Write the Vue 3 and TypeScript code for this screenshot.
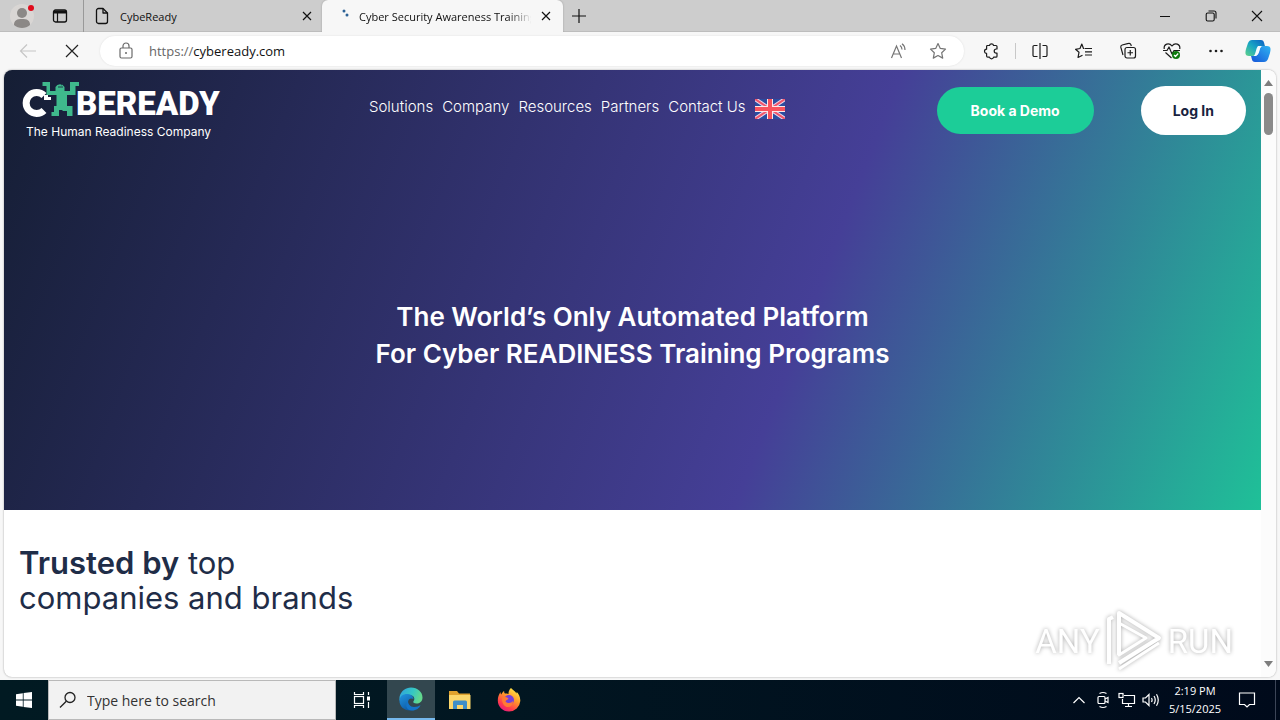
<script setup lang="ts">
import { ref } from 'vue'

const address = ref('cybeready.com')
const query = ref('')
const navLinks: string[] = ['Solutions', 'Company', 'Resources', 'Partners', 'Contact Us']
</script>

<template>
  <div class="desktop">
    <div class="tabstrip">
      <button class="profile" aria-label="Profile">
        <svg width="28" height="28" viewBox="0 0 28 28">
          <circle cx="14" cy="14" r="12" fill="#d9d6d4" />
          <circle cx="14" cy="11" r="5" fill="#8b8886" />
          <path d="M6 23c0-5 3-6 8-6s8 1 8 6c-4 4-12 4-16 0z" fill="#8b8886" />
          <circle cx="23" cy="6" r="3" fill="#e00b1c" />
        </svg>
      </button>
      <button class="workspaces" aria-label="Tab actions">
        <svg width="16" height="16" viewBox="0 0 16 16" fill="none" stroke="#111">
          <rect x="1.5" y="2" width="13" height="12" rx="2" stroke-width="1.3" />
          <path d="M2 4h12" stroke-width="3" />
          <path d="M5.5 5v9" stroke-width="1.2" />
        </svg>
      </button>
      <div class="tab">
        <svg width="16" height="18" viewBox="0 0 16 18" fill="none" stroke="#111" stroke-width="1.3" stroke-linejoin="round">
          <path d="M2.500 3.500a2 2 0 0 1 2-2H9l4.500 4.500v8.500a2 2 0 0 1-2 2h-7a2 2 0 0 1-2-2z" />
          <path d="M9 1.500V6h4.500" />
        </svg>
        <span class="tab-title">CybeReady</span>
        <button aria-label="Close tab">
          <svg width="10" height="10" viewBox="0 0 10 10" stroke="#111" stroke-width="1.2"><path d="M1 1l8 8M9 1l-8 8" /></svg>
        </button>
      </div>
      <div class="tab active">
        <svg width="16" height="18" viewBox="0 0 16 18" fill="#2d6296">
          <circle cx="7" cy="4" r="1.500" /><circle cx="10" cy="8" r="1.500" />
        </svg>
        <span class="tab-title fading">Cyber Security Awareness Training</span>
        <button aria-label="Close tab">
          <svg width="10" height="10" viewBox="0 0 10 10" stroke="#111" stroke-width="1.2"><path d="M1 1l8 8M9 1l-8 8" /></svg>
        </button>
      </div>
      <button class="new-tab" aria-label="New tab">
        <svg width="14" height="14" viewBox="0 0 14 14" stroke="#111" stroke-width="1.2"><path d="M7 0v14M0 7h14" /></svg>
      </button>
      <div class="window-buttons">
        <button aria-label="Minimize">
          <svg width="12" height="12" viewBox="0 0 12 12" stroke="#111"><path d="M1 6.500h10" /></svg>
        </button>
        <button aria-label="Restore">
          <svg width="12" height="12" viewBox="0 0 12 12" fill="none" stroke="#111" stroke-width="1.1">
            <rect x="1.200" y="3" width="8" height="8" rx="1.500" />
            <path d="M3.500 1H9a2 2 0 0 1 2 2v5.500" />
          </svg>
        </button>
        <button aria-label="Close">
          <svg width="12" height="12" viewBox="0 0 12 12" stroke="#111" stroke-width="1.100"><path d="M1 1l10 10M11 1L1 11" /></svg>
        </button>
      </div>
    </div>

    <div class="toolbar">
      <button class="tool" aria-label="Back">
        <svg width="18" height="16" viewBox="0 0 18 16" fill="none" stroke="#c6c6c6" stroke-width="1.200"><path d="M17 8H2M8 1.500L1.500 8 8 14.500" /></svg>
      </button>
      <button class="tool" aria-label="Stop">
        <svg width="14" height="14" viewBox="0 0 14 14" stroke="#222" stroke-width="1.200"><path d="M1 1l12 12M13 1L1 13" /></svg>
      </button>
      <div class="address">
        <svg width="14" height="18" viewBox="0 0 14 18" fill="none" stroke="#6a6a6a" stroke-width="1.200">
          <rect x="1" y="6" width="12" height="10" rx="1.500" />
          <path d="M4 6V4a3 3 0 0 1 6 0v2" />
          <circle cx="7" cy="11" r="1" fill="#6a6a6a" stroke="none" />
        </svg>
        <label class="scheme" for="address">https://</label>
        <input id="address" v-model="address" type="text" />
        <button aria-label="Read aloud">
          <svg width="18" height="16" viewBox="0 0 18 16" fill="none" stroke="#757575" stroke-width="1.200">
            <path d="M1.500 15L6.500 3l5 12M3.200 11h6.600M10 2.500q2 1.500 2 4M12 .800q3 2.200 3 6.200" />
          </svg>
        </button>
        <button aria-label="Add to favorites">
          <svg width="18" height="18" viewBox="0 0 18 18" fill="none" stroke="#757575" stroke-width="1.200" stroke-linejoin="round">
            <path d="M9 1.500l2.300 4.900 5.200.700-3.800 3.700 1 5.300L9 13.500l-4.700 2.600 1-5.300L1.500 7.100l5.200-.700z" />
          </svg>
        </button>
      </div>
      <div class="tools">
        <button class="tool" aria-label="Extensions">
          <svg width="16" height="18" viewBox="0 0 16 18" fill="none" stroke="#1c1c1c" stroke-width="1.200" stroke-linejoin="round">
            <path d="M4 3.500h2.500a2.100 2.100 0 0 1 4.100 0H13a1 1 0 0 1 1 1V7h-.700a2 2 0 0 0 0 4.200h.700v3a1 1 0 0 1-1 1h-2.400a2.100 2.100 0 0 1-4.100 0H4.800a1.200 1.200 0 0 1-1.200-1.200v-2.600a2.100 2.100 0 0 1 0-4.200V4.500z" />
          </svg>
        </button>
        <span class="divider"></span>
        <button class="tool" aria-label="Split screen">
          <svg width="16" height="16" viewBox="0 0 16 16" fill="none" stroke="#1c1c1c" stroke-width="1.200">
            <path d="M5.500 2.500H2.200A1.200 1.200 0 0 0 1 3.700v8.600a1.200 1.200 0 0 0 1.200 1.200h3.300M10.500 2.500h3.300A1.200 1.200 0 0 1 15 3.700v8.600a1.200 1.200 0 0 1-1.200 1.200h-3.300M8 0v16" />
          </svg>
        </button>
        <button class="tool" aria-label="Favorites">
          <svg width="18" height="16" viewBox="0 0 18 16" fill="none" stroke="#1c1c1c" stroke-width="1.200" stroke-linejoin="round">
            <path d="M9.500 5.500h-1L6.800 1 5 5.500l-4.500.800L4 9.300 3 14.500l4.500-2.300M10 5.500h7M10 8.800h7M10 12h7" />
          </svg>
        </button>
        <button class="tool" aria-label="Collections">
          <svg width="18" height="18" viewBox="0 0 18 18" fill="none" stroke="#1c1c1c" stroke-width="1.200">
            <path d="M4 13L1.800 5.200A2 2 0 0 1 3.200 3L9.500 1.400a2 2 0 0 1 2.400 1.200L12.300 4" />
            <rect x="6" y="5.500" width="10.500" height="10.500" rx="2" />
            <path d="M11.250 8v5.500M8.500 10.750H14" />
          </svg>
        </button>
        <button class="tool" aria-label="Browser essentials">
          <svg width="18" height="18" viewBox="0 0 18 18" fill="none" stroke="#1c1c1c" stroke-width="1.200" stroke-linejoin="round">
            <path d="M1.200 7C.500 2 6 0 9 4c3-4 8.500-2 7.800 3M0 8.500h4L6 5l3 7 2-3.500h6M2.500 10.500L8.500 16" />
            <circle cx="13" cy="13" r="4" fill="#0f7b0f" stroke="none" />
            <path d="M11 13l1.500 1.500L15.200 11.500" stroke="#fff" />
          </svg>
        </button>
        <button class="tool" aria-label="More">
          <svg width="14" height="4" viewBox="0 0 14 4" fill="#1c1c1c"><circle cx="1.500" cy="2" r="1.300" /><circle cx="7" cy="2" r="1.300" /><circle cx="12.500" cy="2" r="1.300" /></svg>
        </button>
        <button class="tool" aria-label="Copilot">
          <svg width="26" height="24" viewBox="0 0 26 24">
            <defs>
              <linearGradient id="cpA" x1="0" y1="1" x2="1" y2="0"><stop offset="0" stop-color="#5fd28a" /><stop offset="0.500" stop-color="#18a5c4" /><stop offset="1" stop-color="#0b5bc4" /></linearGradient>
              <linearGradient id="cpB" x1="1" y1="0" x2="0" y2="1"><stop offset="0" stop-color="#2fb4f2" /><stop offset="1" stop-color="#1554d8" /></linearGradient>
            </defs>
            <path d="M7 1h9c3 0 3 3 4 6h-4c-3 0-3 2-4 5s-2 5-5 5H4c-4 0-4-3-3-7l2-6c1-2 2-3 4-3z" fill="url(#cpA)" />
            <path d="M19 23h-9c-3 0-3-3-4-6h3c3 0 4-2 5-5s2-5 4-5h4c4 0 4 3 3 7l-2 6c-1 2-2 3-4 3z" fill="url(#cpB)" />
            <path d="M13 7h3c-2 3-1 8-5 10H9c2-3 2-8 4-10z" fill="#f4fbff" />
          </svg>
        </button>
      </div>
    </div>

    <div class="viewport">
      <div class="page">
        <section class="hero">
          <header class="site-header">
            <a class="logo" href="#" aria-label="CybeReady">
              <svg width="204" height="38" viewBox="0 0 204 38">
                <path d="M22 13.500A10.500 10.500 0 1 0 22 28.500" fill="none" stroke="#fff" stroke-width="7" />
                <path d="M22 13h4v2h3v3h-7z" fill="#fff" />
                <text x="54" y="33" class="wordmark">BEREADY</text>
                <path d="M20.500 0H28v9h5.500V5a5 5 0 0 1 9 0v4H48V0h9v4h-3.500v9H45v11h5.500v10H45v-5h-4.500v-1H37v6h-7.500v-4H32v-6h2.500V13h-10V4h-4z" fill="#3fb98c" />
                <path d="M36 5h5M39 3l2-1" stroke="#1d3a4a" stroke-width="1" />
              </svg>
              <span class="tagline">The Human Readiness Company</span>
            </a>
            <nav class="nav">
              <a v-for="link in navLinks" :key="link" href="#">{{ link }}</a>
              <a class="flag" href="#" aria-label="English">
                <svg width="30" height="20" viewBox="0 0 30 20">
                  <rect width="30" height="20" fill="#2b4ea0" />
                  <path d="M0 0l30 20M30 0L0 20" stroke="#e9d3e8" stroke-width="4" />
                  <path d="M0 0l30 20M30 0L0 20" stroke="#f0556b" stroke-width="2" />
                  <path d="M15 0v20M0 10h30" stroke="#fbe9ea" stroke-width="6" />
                  <path d="M15 0v20M0 10h30" stroke="#f9535d" stroke-width="4" />
                </svg>
              </a>
            </nav>
            <div class="actions">
              <a class="pill demo" href="#">Book a Demo</a>
              <a class="pill login" href="#">Log In</a>
            </div>
          </header>
          <h1>The World’s Only Automated Platform<br />For Cyber READINESS Training Programs</h1>
        </section>
        <section class="trusted">
          <h2><strong>Trusted by</strong> top<br />companies and brands</h2>
        </section>
      </div>
      <div class="scrollbar">
        <svg width="9" height="6" viewBox="0 0 9 6" fill="#7d7d7d"><path d="M0 6L4.500 0 9 6z" /></svg>
        <div class="thumb"></div>
        <svg width="9" height="6" viewBox="0 0 9 6" fill="#7d7d7d"><path d="M0 0l4.500 6L9 0z" /></svg>
      </div>
      <div class="watermark">
        <span>ANY</span>
        <svg width="58" height="64" viewBox="0 0 58 64" fill="none" stroke="#fff" stroke-width="4" stroke-linejoin="round">
          <path d="M4 55V10l4-2" />
          <path d="M14 46V4l40 25-40 25" />
          <path d="M14 14v32l27-17zM14 60L54 34" stroke-width="3" />
        </svg>
        <span>RUN</span>
      </div>
    </div>

    <div class="taskbar">
      <button class="task" aria-label="Start">
        <svg width="16" height="16" viewBox="0 0 16 16" fill="#fff"><path d="M0 2.200L6.800 1.200v6.400H0zM7.600 1.100L16 0v7.600H7.600zM0 8.400h6.800v6.400L0 13.800zM7.600 8.400H16V16l-8.400-1.100z" /></svg>
      </button>
      <div class="search">
        <label for="search" aria-label="Search">
          <svg width="18" height="18" viewBox="0 0 18 18" fill="none" stroke="#222" stroke-width="1.300"><circle cx="11" cy="6.500" r="5" /><path d="M7.300 10.200L1 16.500" /></svg>
        </label>
        <input id="search" v-model="query" type="text" placeholder="Type here to search" />
      </div>
      <div class="apps">
        <button class="task" aria-label="Task view">
          <svg width="18" height="18" viewBox="0 0 18 18" fill="none" stroke="#fff" stroke-width="1.200">
            <path d="M1.500 1v2.500h9V1M1.500 17v-2.500h9V17M15.500 1v3M15.500 11v6" />
            <rect x="1.500" y="5.500" width="9" height="7" />
            <path d="M15.500 5.500v4" stroke-width="3" />
          </svg>
        </button>
        <button class="task current" aria-label="Microsoft Edge">
          <svg width="24" height="24" viewBox="0 0 24 24">
            <defs>
              <linearGradient id="edA" x1="0" y1="0" x2="1" y2="0.300"><stop offset="0" stop-color="#2f9fe0" /><stop offset="0.600" stop-color="#35c7c4" /><stop offset="1" stop-color="#62d88e" /></linearGradient>
              <linearGradient id="edB" x1="0" y1="0" x2="0.600" y2="1"><stop offset="0" stop-color="#2295e0" /><stop offset="1" stop-color="#0c59a4" /></linearGradient>
            </defs>
            <path d="M.500 10C2 4 6.500.500 12 .500c6.500 0 11.500 4.500 11.500 10 0 4-3 6-6 6-2.500 0-4-1-3-2.200 2-2.500.500-6.300-4-6.300C6 8 2 9 .500 14z" fill="url(#edA)" />
            <path d="M.500 13C1 8.500 5 6.500 9 7c3 .300 5.500 2 5.500 5-3-1.500-5.500 0-5.500 3.500 0 3.700 4 7.500 8 7-10 3.500-17-2.500-16.500-9.500z" fill="url(#edB)" />
            <path d="M9.200 13c-1 3.500 2 7 5.800 7 3 0 5-1 6.500-2-1 3-4 5.500-8.500 5.500-5 0-8-5-3.800-10.500z" fill="#1474c8" />
          </svg>
        </button>
        <button class="task" aria-label="File Explorer">
          <svg width="22" height="20" viewBox="0 0 22 20">
            <path d="M0 1h8l2 2.500h11V7H0z" fill="#e0a22e" />
            <path d="M0 5h21.500v14H0z" fill="#fbd66b" />
            <path d="M4 19v-7a1.500 1.500 0 0 1 1.500-1.500h11A1.500 1.500 0 0 1 18 12v7h-4v-4H8v4z" fill="#3f8fc8" />
          </svg>
        </button>
        <button class="task" aria-label="Firefox">
          <svg width="24" height="24" viewBox="0 0 24 24">
            <defs>
              <linearGradient id="ffA" x1="0.800" y1="0" x2="0.200" y2="1"><stop offset="0" stop-color="#fff04a" /><stop offset="0.400" stop-color="#ff9a2a" /><stop offset="0.750" stop-color="#ff3c4b" /><stop offset="1" stop-color="#e31587" /></linearGradient>
            </defs>
            <path d="M14 0c1.500 2 4 3 5.500 5.500.300-1 0-1.800 0-1.800 2 2 4 5 3.800 9.300A11.300 11.300 0 0 1 12 23.500C5.500 23.500.800 18.500.800 12.500c0-3.500 1-6 2.700-8.500 0 1.200.300 1.800.700 2.500C5 5 6 3.500 7.200 3c-.200 1.200 0 2 .700 2.500 1.200 0 2.400 0 3.600.500C11.500 3.500 12.500 1.200 14 0z" fill="url(#ffA)" />
            <circle cx="12" cy="12" r="5" fill="#7540d8" />
            <path d="M5.500 9c2.500-.500 4.500.500 6 1.500-1 1.500-2.500 1.500-3 3 2.500 2.500 6 1.500 7.500-.500 0 4-2.500 6-5 6-4 0-7-5-5.500-10z" fill="#ff7a34" />
          </svg>
        </button>
      </div>
      <div class="tray">
        <button aria-label="Show hidden icons"><svg width="12" height="8" viewBox="0 0 12 8" fill="none" stroke="#fff" stroke-width="1.200"><path d="M.500 7L6 1.500 11.500 7" /></svg></button>
        <button aria-label="Meet now">
          <svg width="12" height="18" viewBox="0 0 12 18" fill="none" stroke="#fff" stroke-width="1.200"><rect x="1" y="5.500" width="7" height="7" rx="1" /><path d="M8 8l3-1.500v5L8 10M2.500 2.500q3.500-2 7 0M2.500 15.500q3.500 2 7 0" /></svg>
        </button>
        <button aria-label="Network">
          <svg width="18" height="16" viewBox="0 0 18 16" fill="none" stroke="#fff" stroke-width="1.200"><path d="M6 3.500h10.500v8H4.500V7M10.500 11.500v3M7 14.500h7" /><rect x="1" y="1.500" width="4" height="4" /></svg>
        </button>
        <button aria-label="Volume">
          <svg width="18" height="14" viewBox="0 0 18 14" fill="none" stroke="#fff" stroke-width="1.200"><path d="M1 5v4h2.500L7 12.500v-11L3.500 5zM9.500 5q1.200 2 0 4M12 3q2.500 4 0 8M14.500 1.200q3.500 5.800 0 11.600" /></svg>
        </button>
        <div class="clock"><time>2:19 PM</time><time>5/15/2025</time></div>
        <button class="notice" aria-label="Notifications">
          <svg width="18" height="18" viewBox="0 0 18 18" fill="none" stroke="#fff" stroke-width="1.200"><path d="M1.500 2h15v11.500h-5L9 16l-2.500-2.500h-5z" /></svg>
        </button>
      </div>
    </div>
  </div>
</template>

<style>
body {
  margin: 0;
}
</style>

<style scoped>
.desktop {
  display: flex;
  flex-direction: column;
  height: 100vh;
  overflow: hidden;
  background: #f7f7f7;
  font-family: "Open Sans", "Noto Sans", sans-serif;
  color: #111;
}
.desktop * {
  box-sizing: border-box;
}
button {
  display: flex;
  align-items: center;
  justify-content: center;
  padding: 0;
  border: 0;
  background: none;
  font: inherit;
}
a {
  color: inherit;
  text-decoration: none;
}
svg {
  display: block;
  flex: none;
}
input {
  flex: 1;
  min-width: 0;
  padding: 0;
  border: 0;
  outline: 0;
  background: none;
  font: inherit;
  color: inherit;
}

.tabstrip {
  display: flex;
  flex: none;
  height: 32px;
  background: #cdcdcd;
  box-shadow: inset 0 -1px #bdbdbd;
}
.profile {
  width: 44px;
}
.workspaces {
  width: 32px;
}
.tab {
  display: flex;
  align-items: center;
  gap: 10px;
  width: 239px;
  margin: 0 0 0 7px;
  padding: 0 10px;
  font-size: 11px;
}
.tab:not(.active) {
  border-left: 1px solid #999;
}
.tab.active {
  gap: 6px;
  width: 241px;
  margin: 0;
  padding: 0 12px 0 15px;
  border-radius: 6px 6px 0 0;
  box-shadow: 0 0 2px #999;
  background: #f7f7f7;
  clip-path: inset(0 -2px);
}
.tab-title {
  flex: 1;
  overflow: hidden;
  white-space: nowrap;
}
.fading {
  mask-image: linear-gradient(90deg, #000 85%, transparent 98%);
}
.new-tab {
  width: 32px;
}
.window-buttons {
  display: flex;
  margin-left: auto;
}
.window-buttons button {
  width: 46px;
}

.toolbar {
  display: flex;
  flex: none;
  align-items: center;
  height: 38px;
  padding: 0 2px 0 6px;
}
.tool {
  width: 44px;
  height: 32px;
}
.address {
  display: flex;
  flex: 1;
  align-items: center;
  height: 30px;
  margin: 0 5px 0 6px;
  padding: 0 17px 0 19px;
  border-radius: 15px;
  background: #fff;
  box-shadow: 0 0 2px #ddd;
  font-size: 13px;
}
.scheme {
  margin-left: 16px;
  color: #666;
}
.address button {
  margin-left: 21px;
}
.tools {
  display: flex;
  align-items: center;
}
.tools .tool:last-child {
  width: 40px;
}
.divider {
  width: 1px;
  height: 16px;
  margin: 0 2px;
  background: #c8c8c8;
}

.viewport {
  position: relative;
  display: flex;
  flex: 1;
  min-height: 0;
  margin: 0 4px 3px;
  overflow: hidden;
  border-radius: 8px;
  background: #fff;
  box-shadow: 0 0 2px #999;
}
.page {
  flex: 1;
  overflow: hidden;
  font-family: Inter, "Open Sans", sans-serif;
}
.hero {
  display: flex;
  flex-direction: column;
  min-height: 440px;
  background: linear-gradient(111deg, #151e34 0%, #453f97 63%, #1fc098 100%);
  color: #fff;
}
.site-header {
  display: grid;
  grid-template-columns: 347px auto 1fr;
  align-items: start;
  padding: 12px 15px 0 18px;
  height: 90px;
}
.logo {
  display: flex;
  flex-direction: column;
}
.wordmark {
  fill: #fff;
  font-family: Roboto, sans-serif;
  font-weight: 900;
  font-size: 33px;
}
.tagline {
  margin: 4px 0 0 4px;
  font-size: 12px;
  line-height: 16px;
  font-weight: 400;
}
.nav {
  display: flex;
  align-items: center;
  gap: 9px;
  padding-top: 13px;
  font-size: 15px;
  line-height: 22px;
  font-weight: 300;
}
.flag {
  padding-top: 4px;
}
.actions {
  display: flex;
  align-items: center;
  justify-content: flex-end;
  gap: 47px;
  padding-top: 4px;
}
.pill {
  padding: 0 32px;
  border-radius: 25px;
  font-size: 14px;
  font-weight: 700;
  line-height: 47px;
  white-space: nowrap;
}
.demo {
  padding: 0 34px;
  background: #1ccd98;
}
.login {
  background: #fff;
  color: #19233f;
  line-height: 49px;
}
h1 {
  margin: auto;
  font-size: 26px;
  line-height: 37px;
  font-weight: 600;
  text-align: center;
}
.trusted {
  padding: 35px 15px;
}
h2 {
  margin: 0;
  font-size: 31px;
  line-height: 35px;
  font-weight: 400;
  color: #1f2d48;
}
h2 strong {
  font-weight: 600;
}
.scrollbar {
  display: flex;
  flex-direction: column;
  align-items: center;
  width: 15px;
  padding: 10px 0;
  background: #fcfcfc;
}
.thumb {
  width: 9px;
  height: 42px;
  margin: 7px 0 auto;
  border-radius: 5px;
  background: #8a8a8a;
}
.watermark {
  position: absolute;
  right: 43px;
  bottom: 4px;
  display: flex;
  align-items: center;
  gap: 5px;
  color: #fff;
  font-family: Roboto, sans-serif;
  font-size: 33px;
  font-weight: 400;
  filter: drop-shadow(0 0 2px #aaa);
}

.taskbar {
  display: flex;
  flex: none;
  height: 40px;
  background: linear-gradient(90deg, #011a22, #011621 40%, #000a1b);
  color: #fff;
}
.task {
  width: 48px;
  height: 40px;
}
.search {
  display: flex;
  align-items: center;
  gap: 10px;
  width: 288px;
  padding: 0 10px;
  border: 1px solid #b9b9b9;
  background: #f2f2f2;
  color: #333;
  font-size: 14px;
}
.search input::placeholder {
  color: #333;
  opacity: 1;
}
.apps {
  display: flex;
  gap: 1px;
  padding-left: 2px;
}
.current {
  background: #33474f;
  border-bottom: 2px solid #76b9ed;
}
.tray {
  display: flex;
  align-items: center;
  margin-left: auto;
  margin-right: 4px;
  padding-right: 8px;
  border-right: 1px solid #3c4557;
}
.tray button {
  width: 24px;
}
.clock {
  display: flex;
  flex-direction: column;
  align-items: center;
  width: 64px;
  font-size: 11px;
  line-height: 18px;
}
.tray .notice {
  width: 40px;
}
</style>
